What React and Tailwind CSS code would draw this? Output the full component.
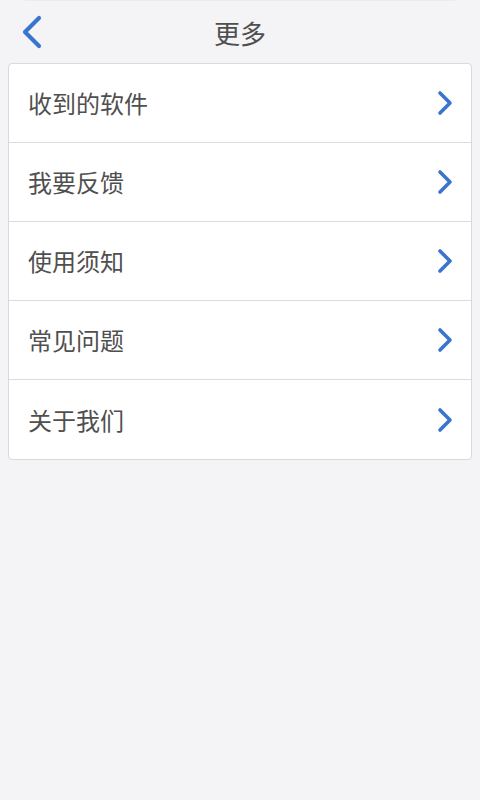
export default function App() {
  const items = ["收到的软件", "我要反馈", "使用须知", "常见问题", "关于我们"];
  return (
    <div
      className="w-[480px] h-[800px] bg-[#f4f4f6] overflow-hidden"
      style={{ fontFamily: '"Noto Sans CJK SC", "Noto Sans", sans-serif' }}
    >
      <div className="h-px mx-[25px] bg-[#ececef]" />
      <div className="relative h-[62px] flex items-center justify-center">
        <svg
          className="absolute left-[20px] top-[14px]"
          width="24"
          height="34"
          viewBox="0 0 24 34"
        >
          <path
            d="M19 3 L5 17 L19 31"
            fill="none"
            stroke="#3a74cf"
            strokeWidth="4.2"
            strokeLinecap="round"
            strokeLinejoin="round"
          />
        </svg>
        <span className="text-[26px] leading-none text-[#4f4f4f] mt-[1px]">更多</span>
      </div>
      <div className="mx-[8px] bg-white border border-[#d9d9dc] rounded-[4px]">
        {items.map((t, i) => (
          <div
            key={t}
            className={
              "flex items-center justify-between h-[79px] pl-[19px] pr-[17px] " +
              (i < items.length - 1 ? "border-b border-[#dcdcdf]" : "")
            }
          >
            <span className="text-[24px] leading-none text-[#4f4f4f]">{t}</span>
            <svg width="18" height="26" viewBox="0 0 18 26">
              <path
                d="M4 3 L14 13 L4 23"
                fill="none"
                stroke="#3a74cf"
                strokeWidth="3.6"
                strokeLinecap="round"
                strokeLinejoin="round"
              />
            </svg>
          </div>
        ))}
      </div>
    </div>
  );
}
